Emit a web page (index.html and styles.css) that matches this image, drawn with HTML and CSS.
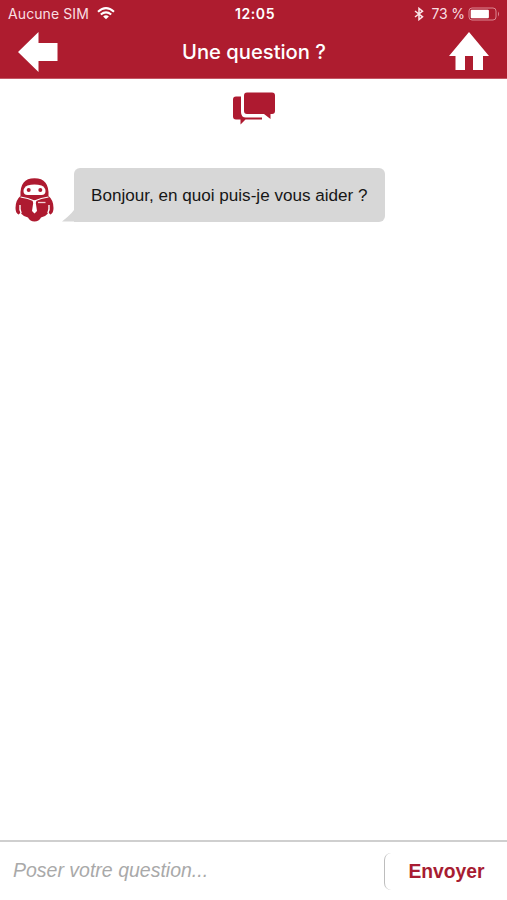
FILE: index.html
```
<!DOCTYPE html>
<html lang="fr">
<head>
<meta charset="utf-8">
<title>Une question ?</title>
<link rel="stylesheet" href="styles.css">
</head>
<body>
<header class="header">
  <div class="status">
    <div class="status-left">
      <span class="carrier">Aucune SIM</span>
      <svg class="wifi" width="18" height="13" viewBox="0 0 18 13" fill="none" stroke="#fff" stroke-width="2.1">
        <path d="M1 4.7Q9-2.3 17 4.7M3.8 7.5Q9 3.1 14.2 7.5"/>
        <path d="M6.1 9.4Q9 7.2 11.900 9.4L9 12.300Z" fill="#fff" stroke="none"/>
      </svg>
    </div>
    <span class="clock">12:05</span>
    <div class="status-right">
      <svg class="bluetooth" width="10" height="14" viewBox="0 0 10 14" fill="none" stroke="#fbe6e9" stroke-width="1.5">
        <path d="M1 4L8.500 9.800L5 12.600V1.400L8.500 4.200L1 10"/>
      </svg>
      <span class="percent">73 %</span>
      <svg class="battery" width="32" height="14" viewBox="0 0 32 14">
        <rect x="1" y="1" width="27" height="12" rx="3" fill="none" stroke="#dc8793"/>
        <rect x="2.700" y="2.700" width="18.200" height="8.600" rx="1" fill="#fff"/>
        <path d="M30 4.500Q32 7 30 9.500Z" fill="#dc8793"/>
      </svg>
    </div>
  </div>
  <nav class="nav">
    <svg width="41" height="40" viewBox="0 0 41 40"><path d="M0 20L20.500 0V11H39.500V29H20.500V40Z" fill="#fff"/></svg>
    <h1 class="title">Une question ?</h1>
    <svg width="40" height="39" viewBox="0 0 40 39"><path d="M20 0L40 24H34V38H24V24H16V38H6.500V24H0Z" fill="#fff"/></svg>
  </nav>
</header>
<main class="chat">
  <svg class="chat-icon" width="42" height="33" viewBox="0 0 42 33" fill="#ae1a30">
    <path d="M3 4.500H8V20Q8 25.500 13 25.500H29V27.500H12.500L7.500 32.500V27.500H3Q0 27.500 0 24.500V7.500Q0 4.500 3 4.500Z"/>
    <path d="M14 .5H39Q42 .5 42 3.500V19Q42 22 39 22H37.500V27L31 22H14Q11 22 11 19V3.500Q11 .5 14 .5Z"/>
  </svg>
  <div class="message">
    <svg class="avatar" width="40" height="45" viewBox="0 0 40 45">
      <path d="M5.500 19Q4.500 1.200 19.500 1.200Q34.500 1.200 33.500 19Q38.500 23 38.500 31Q38.500 36 35.500 37.500L33 36.500Q30.500 39.500 26 40.500Q24 44.500 19.500 44.500Q15 44.500 13 40.500Q8.500 39.500 6 36.500L3.500 37.500Q.5 36 .5 31Q.5 23 5.500 19Z" fill="#ae1a30"/>
      <path d="M12.500 8.500Q19.500 6.500 26.500 8.500Q30.500 10.500 30.500 14Q30.500 18 26.500 18H12.500Q8.500 18 8.500 14Q8.500 10.500 12.500 8.500Z" fill="#fff"/>
      <circle cx="13.700" cy="13" r="2" fill="#ae1a30"/>
      <circle cx="25.300" cy="13" r="2" fill="#ae1a30"/>
      <path d="M5.500 20Q13 21 19.500 24Q26 21 33.500 20" fill="none" stroke="#fff" stroke-width="1.200"/>
      <path d="M17.500 23.500H21.500L20.800 26L22 34L19.500 36.500L17 34L18.200 26Z" fill="#fff"/>
      <path d="M23 25.500H30.500" stroke="#f2d2d7" stroke-width="1.300"/>
      <path d="M5 28Q4.500 33 6 35.500L4.500 38M34 28Q34.500 33 33 35.500L34.500 38" fill="none" stroke="#fff" stroke-width="1.400"/>
    </svg>
    <svg class="tail" width="13" height="14" viewBox="0 0 13 14"><path d="M13 0Q12 4 0 13.500H13Z" fill="#d7d7d7"/></svg>
    <p class="bubble">Bonjour, en quoi puis-je vous aider ?</p>
  </div>
</main>
<footer class="composer">
  <span class="prompt">Poser votre question...</span>
  <button class="send" type="button">Envoyer</button>
</footer>
</body>
</html>
```
FILE: styles.css
```
* { box-sizing: border-box; }
body {
  margin: 0;
  height: 900px;
  display: flex;
  flex-direction: column;
  background: #fff;
  font-family: "Liberation Sans", Arial, sans-serif;
  overflow: hidden;
}
.header {
  height: 79px;
  background: #ae1c2f;
  border-bottom: 1px solid #c45765;
  color: #fff;
  font-family: Inter, sans-serif;
}
.status {
  height: 27px;
  display: grid;
  grid-template-columns: 1fr auto 1fr;
  align-items: center;
  padding: 0 7px 0 8px;
  font-size: 14px;
  line-height: 27px;
}
.status-left, .status-right { display: flex; align-items: center; }
.status-left { gap: 8px; color: #f9dfe2; }
.status-right { justify-content: flex-end; color: #f9dfe2; }
.carrier { letter-spacing: 0.1px; }
.clock { padding-left: 2px; font-weight: 600; letter-spacing: 0.6px; }
.percent { margin: 0 3px 0 7px; letter-spacing: -0.1px; }
.nav {
  height: 51px;
  display: flex;
  justify-content: space-between;
  align-items: center;
  padding: 0 18px 2px;
}
.title { margin: 0; font-size: 20.2px; line-height: 28px; font-weight: 500; }
.chat { flex: 1; padding-top: 13px; display: flex; flex-direction: column; }
.chat-icon { margin-left: 233px; }
.message { display: flex; align-items: flex-end; margin: 43px 0 0 15px; }
.tail { margin-left: 7px; }
.bubble {
  margin: 0 0 0 -1px;
  width: 311px;
  height: 54px;
  padding: 1px 0 0 17px;
  border-radius: 6px 6px 6px 0;
  background: #d7d7d7;
  color: #161616;
  font-size: 17.1px;
  line-height: 54px;
  white-space: nowrap;
}
.composer {
  height: 60px;
  display: flex;
  align-items: center;
  justify-content: space-between;
  border-top: 2px solid #cfcfcf;
  padding-left: 13px;
}
.prompt { padding-bottom: 1px; color: #a9a9a9; font-size: 19.5px; font-style: italic; }
.send {
  width: 123px;
  height: 37px;
  padding: 2px 0 0 1px;
  border: 0 solid #bdbdbd;
  border-left-width: 1.5px;
  border-radius: 7px;
  background: #fff;
  color: #a71c32;
  font: bold 19.3px "Liberation Sans", Arial, sans-serif;
}
```
